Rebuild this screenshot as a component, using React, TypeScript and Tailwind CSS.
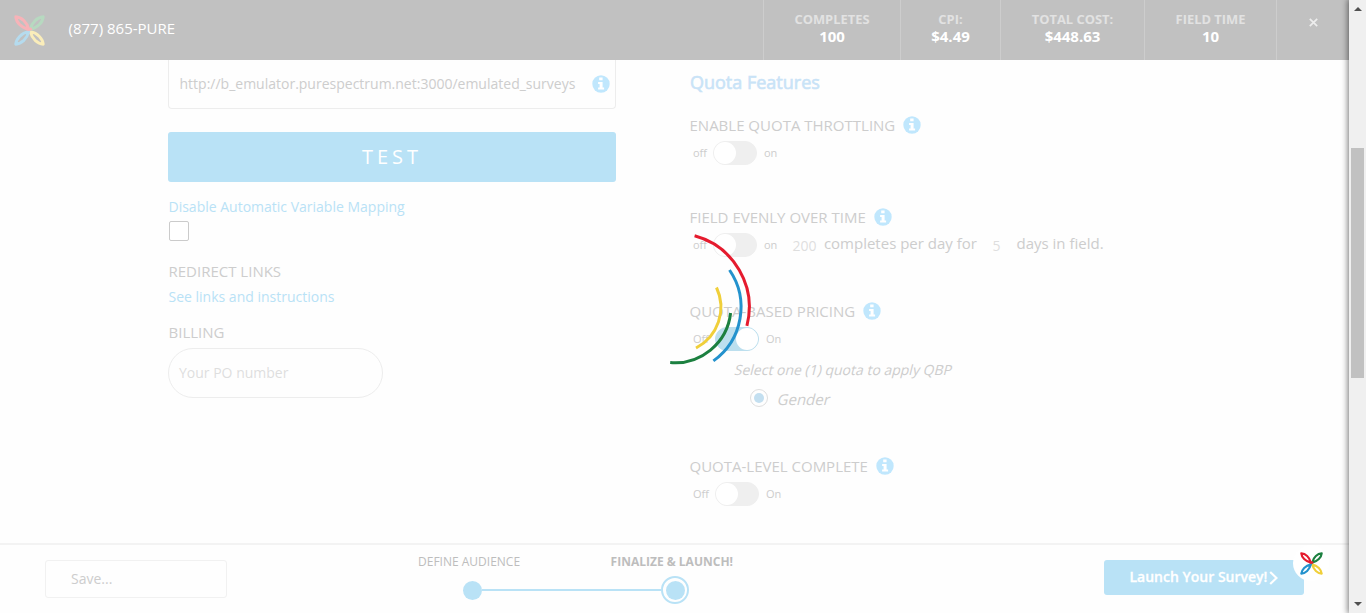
import React from "react";

function Logo({ className, faded = false }: { className: string; faded?: boolean }) {
  const petal = "M1.8 1.8C7.5 2.2 13.3 7 15.2 14.8C7.4 13.3 2.4 7.5 1.8 1.8Z";
  const [red, green, blue, yellow] = faded
    ? ["#f7b3b8", "#b7d9c0", "#b5dbee", "#faedba"]
    : ["#e51b2e", "#1c8040", "#2492cd", "#f0cf3a"];
  return (
    <svg viewBox="0 0 32 32" fill="none" strokeWidth="3" strokeLinejoin="round" className={className}>
      <path d={petal} stroke={yellow} transform="rotate(180 16 16)" />
      <path d={petal} stroke={blue} transform="matrix(1 0 0 -1 0 32)" />
      <path d={petal} stroke={green} transform="matrix(-1 0 0 1 32 0)" />
      <path d={petal} stroke={red} />
      <path d="M13.5 14.3Q16 15.4 18.4 14" stroke={red} />
    </svg>
  );
}

function Info({ className = "" }: { className?: string }) {
  return (
    <svg viewBox="0 0 18 18" className={"size-[18px] shrink-0 " + className}>
      <circle cx="9" cy="9" r="8.7" fill="#c0e7fd" />
      <path d="M7.2 2.6h3.4v2.7H7.2zM6.1 7h4.5v5.6h1.5v2H6.1v-2h1.5V9H6.1z" fill="#fff" />
    </svg>
  );
}

function Toggle({ on = false }: { on?: boolean }) {
  return (
    <span className={on ? "flex h-6 w-11 shrink-0 justify-end rounded-full border border-[#bcdfee] bg-[#bcdfee]" : "flex h-6 w-11 shrink-0 rounded-full border border-[#efefef] bg-[#efefef]"}>
      <span className="size-[22px] rounded-full bg-white" />
    </span>
  );
}

function Feature({ title, off, onText, on, gap, children }: { title: string; off: string; onText: string; on?: boolean; gap: string; children?: React.ReactNode }) {
  return (
    <>
      <div className="flex h-[22px] items-center gap-2 pl-[.5px] text-[15px]">
        <span>{title}</span>
        <Info />
      </div>
      <div className="mt-[5px] flex h-6 items-center pl-[4px] text-[11px]">
        <span className={gap}>{off}</span>
        <Toggle on={on} />
        <span className="ml-[7px]">{onText}</span>
        {children}
      </div>
    </>
  );
}

function Stat({ label, value, className }: { label: string; value: string; className: string }) {
  return (
    <div className={"flex h-full flex-col items-center border-l border-[#cdcdcd] pt-[11px] font-bold " + className}>
      <span className="text-[12.9px] leading-[17px] text-[#e2e2e2]">{label}</span>
      <span className="-mt-px text-[15px] leading-[18px] text-white">{value}</span>
    </div>
  );
}

export default function App() {
  return (
    <div className="relative flex h-[613px] w-[1366px] overflow-hidden bg-[#fefefe] font-['Open_Sans',sans-serif] text-[#cdcdcd]">
      <div className="flex w-[1349px] flex-col">
        <header className="flex h-[60px] shrink-0 bg-[#c1c1c1]">
          <Logo faded className="mt-[15px] ml-[14px] size-[31px]" />
          <span className="mt-[17px] ml-[23.5px] text-[15px] leading-[23px] text-white">(877) 865-PURE</span>
          <div className="ml-auto flex">
            <Stat label="COMPLETES" value="100" className="w-[137px]" />
            <Stat label="CPI:" value="$4.49" className="w-[100px]" />
            <Stat label="TOTAL COST:" value="$448.63" className="w-[144px]" />
            <Stat label="FIELD TIME" value="10" className="w-[132px]" />
            <div className="flex w-[73px] justify-center border-l border-[#cdcdcd] pt-[18px]">
              <svg viewBox="0 0 9 9" className="size-[9px]" stroke="#ededed" strokeWidth="1.7"><path d="M.8 .8L8.2 8.2M8.2 .8L.8 8.2" /></svg>
            </div>
          </div>
        </header>

        <main className="flex h-[483px] shrink-0 pl-[168px]">
          <section className="w-[448px]">
            <div className="flex h-[49px] items-center rounded-b border border-t-0 border-[#ededed] pr-[5px] pb-px pl-[10.5px] text-[14px]">
              <span className="whitespace-nowrap">http://b_emulator.purespectrum.net:3000/emulated_surveys</span>
              <Info className="ml-auto" />
            </div>
            <div className="mt-[23px] flex h-[50px] items-center justify-center rounded-[3px] bg-[#b9e2f6] text-[20px] tracking-[4px] text-white">TEST</div>
            <p className="mt-[14px] pl-[.5px] text-[14px] leading-[22px] text-[#b9e2f6]">Disable Automatic Variable Mapping</p>
            <div className="mt-[3px] ml-px size-5 rounded-[2px] border border-[#cbcbcb] bg-white" />
            <p className="mt-[19px] pl-[.5px] text-[15px] leading-[22px]">REDIRECT LINKS</p>
            <p className="mt-[4px] pl-[.5px] text-[14px] leading-[22px] text-[#b9e2f6]">See links and instructions</p>
            <p className="mt-[13px] pl-[.5px] text-[15px] leading-[22px]">BILLING</p>
            <div className="mt-[5px] flex h-[50px] w-[215px] items-center rounded-full border border-[#ededed] pb-0.5 pl-[10px] text-[14px] text-[#dedede]">Your PO number</div>
          </section>

          <section className="ml-[73px] w-[480px] pt-[10px]">
            <h2 className="pl-px text-[18px] leading-6 font-normal text-[#c9e3f7] [-webkit-text-stroke:0.6px_#c9e3f7]">Quota Features</h2>
            <div className="mt-5">
              <Feature title="ENABLE QUOTA THROTTLING" off="off" onText="on" gap="w-[20px]" />
            </div>
            <div className="mt-[41px]">
              <Feature title="FIELD EVENLY OVER TIME" off="off" onText="on" gap="w-[20px]">
                <span className="ml-[15px] text-[14px] text-[#dedede]">200</span>
                <span className="relative -top-0.5 ml-[7.5px] text-[15px]">completes per day for</span>
                <span className="ml-[15.5px] text-[14px] text-[#dedede]">5</span>
                <span className="relative -top-0.5 ml-4 text-[15px]">days in field.</span>
              </Feature>
            </div>
            <div className="mt-[43px]">
              <Feature title="QUOTA-BASED PRICING" off="Off" onText="On" gap="w-[22px]" on />
            </div>
            <p className="mt-[8px] ml-[46px] w-fit -skew-x-[14deg] text-[14px] leading-[22px]">Select one (1) quota to apply QBP</p>
            <div className="mt-[6px] ml-[61px] flex h-[22px] items-center">
              <span className="flex size-[18px] items-center justify-center rounded-full border border-[#dedede]">
                <span className="size-[10px] rounded-full bg-[#c3dff0]" />
              </span>
              <span className="mt-0.5 ml-[10px] -skew-x-[14deg] text-[15px]">Gender</span>
            </div>
            <div className="mt-[46px]">
              <Feature title="QUOTA-LEVEL COMPLETE" off="Off" onText="On" gap="w-[22px]" />
            </div>
          </section>
        </main>

        <footer className="flex h-[70px] shrink-0 border-t-2 border-[#f3f3f3]">
          <div className="mt-[15px] ml-[45px] flex h-[38px] w-[182px] items-center rounded-[3px] border border-[#f1f1f1] pb-px pl-[25px] text-[14px]">Save...</div>
          <div className="ml-[191px] w-[320px] pt-[8px]">
            <div className="flex justify-between pr-[5px] text-[12px] leading-[18px] text-[#bdbdbd]">
              <span>DEFINE AUDIENCE</span>
              <span className="font-bold">FINALIZE &amp; LAUNCH!</span>
            </div>
            <div className="mt-[5px] ml-[45px] flex h-7 items-center">
              <span className="size-[19px] rounded-full bg-[#b9e2f6]" />
              <span className="h-0.5 w-[179px] bg-[#b9e2f6]" />
              <span className="flex size-7 items-center justify-center rounded-full border-2 border-[#b9e2f6]">
                <span className="size-[19px] shrink-0 rounded-full bg-[#b9e2f6]" />
              </span>
            </div>
          </div>
          <div className="mt-[15px] ml-[366px] flex h-[35px] w-[200px] items-center rounded-[3px] bg-[#b9e2f6] pb-0.5 pl-[25.5px] text-[14px] font-semibold text-white">
            <span className="whitespace-nowrap [-webkit-text-stroke:0.3px_white]">Launch Your Survey!</span>
            <svg viewBox="0 0 9 14" className="mt-0.5 ml-0.5 h-[14px] w-[9px]" fill="none" stroke="#fff" strokeWidth="2.2"><path d="M1.2 1L7.5 7L1.2 13" /></svg>
          </div>
        </footer>
      </div>

      <aside className="flex w-[17px] flex-col items-center bg-[#f0f0f0] shadow-[0_0_6px_1px_rgba(0,0,0,0.55)]">
        <svg viewBox="0 0 8 4" className="mt-[7px] h-[4px] w-[8px]"><path d="M0 4L4 0L8 4Z" fill="#505050" /></svg>
        <div className="mt-[137px] h-[230px] w-[13px] bg-[#c1c1c1]" />
        <svg viewBox="0 0 8 4" className="mt-auto mb-[7px] h-[4px] w-[8px]"><path d="M0 0L4 4L8 0Z" fill="#505050" /></svg>
      </aside>

      <div className="absolute top-[545px] left-[1293px] flex size-9 items-center justify-center rounded-full bg-white">
        <Logo className="size-[23px]" />
      </div>

      <svg viewBox="0 0 160 160" className="absolute top-[227px] left-[594.5px] size-40" fill="none" strokeWidth="3">
        <path d="M99.6 8.8A74 74 0 0 1 151.9 98.8" stroke="#e51b2e" />
        <path d="M134.5 43A66 66 0 0 1 118.4 133.9" stroke="#2492cd" />
        <path d="M121.5 60.5A46 46 0 0 1 101 121" stroke="#f0cf3a" />
        <path d="M135.6 86A56 56 0 0 1 75.2 135.6" stroke="#1c8040" />
      </svg>
    </div>
  );
}
